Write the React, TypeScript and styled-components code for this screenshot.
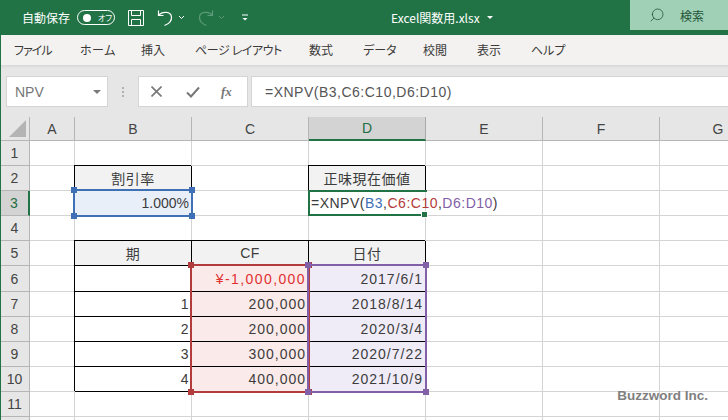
import * as React from 'react';
import styled, { createGlobalStyle } from 'styled-components';
import { Search } from 'lucide-react';

const Global = createGlobalStyle`
  html, body {
    margin: 0;
    padding: 0;
    background: #fff;
  }
  body {
    width: 728px;
    height: 420px;
    overflow: hidden;
    font-family: 'Noto Sans CJK JP', 'Liberation Sans', sans-serif;
  }
`;

const Page = styled.div`
  width: 728px;
  height: 420px;
  overflow: hidden;
  position: relative;
  display: flex;
  flex-direction: column;
  border-left: 1px solid #217346;
  box-sizing: border-box;
`;

const TitleBar = styled.div`
  height: 35px;
  margin-left: -1px;
  flex: none;
  background: #217346;
  color: #fff;
  display: flex;
  align-items: center;
  font-size: 12px;
`;

const AutoSave = styled.span`
  margin-left: 22px;
  width: 48px;
  white-space: nowrap;
`;

const Toggle = styled.div`
  margin-left: 7px;
  width: 38px;
  height: 15px;
  border: 1px solid #fff;
  border-radius: 9px;
  display: flex;
  align-items: center;
  gap: 7px;
  padding-left: 5px;
  box-sizing: border-box;
  font-size: 8px;
  font-feature-settings: 'palt';
`;

const Knob = styled.i`
  width: 8px;
  height: 8px;
  border-radius: 50%;
  background: #fff;
`;

const QuickIcon = styled.svg<{ $left: number }>`
  margin-left: ${(p) => p.$left}px;
  flex: none;
`;

const FileName = styled.div`
  margin-left: 142px;
  font-size: 12px;
  white-space: nowrap;
  display: flex;
  align-items: center;
  gap: 7px;
  font-feature-settings: 'palt';
`;

const Caret = styled.i`
  width: 0;
  height: 0;
  border-left: 3px solid transparent;
  border-right: 3px solid transparent;
  border-top: 3px solid #fff;
`;

const SearchBox = styled.div`
  margin-left: auto;
  width: 98px;
  height: 30px;
  margin-top: -5px;
  background: #a0d0b5;
  color: #24563a;
  display: flex;
  align-items: center;
  font-size: 12px;
  padding-left: 19px;
  gap: 15px;
  box-sizing: border-box;
  flex: none;
`;

const TabBar = styled.div`
  height: 30px;
  flex: none;
  background: #f3f2f1;
  display: flex;
  align-items: center;
  padding-left: 13px;
  gap: 28px;
  font-size: 12px;
  color: #3b3a39;
  padding-bottom: 1px;
  box-sizing: border-box;
  font-feature-settings: 'palt';
`;

const Tab = styled.span<{ $width: number; $squeeze?: number }>`
  width: ${(p) => p.$width}px;
  letter-spacing: ${(p) => p.$squeeze ?? 0}px;
  white-space: nowrap;
`;

const FormulaArea = styled.div`
  height: 52px;
  flex: none;
  background: linear-gradient(#d6d6d6, #e6e6e6 3px);
  display: flex;
  align-items: flex-start;
  padding: 11px 0 0 5px;
  box-sizing: border-box;
`;

const NameBox = styled.div`
  width: 102px;
  height: 31px;
  background: #fff;
  border: 1px solid #d4d4d4;
  box-sizing: border-box;
  display: flex;
  align-items: center;
  justify-content: space-between;
  padding: 0 6px 0 8px;
  font: 14px 'Liberation Sans', sans-serif;
  color: #767676;
`;

const GrayCaret = styled.i`
  width: 0;
  height: 0;
  border-left: 4px solid transparent;
  border-right: 4px solid transparent;
  border-top: 4px solid #7a7a7a;
`;

const Dots = styled.div`
  width: 30px;
  height: 31px;
  display: flex;
  flex-direction: column;
  align-items: center;
  justify-content: center;
  gap: 2px;
`;

const Dot = styled.i`
  width: 2px;
  height: 2px;
  background: #b0b0b0;
`;

const FormulaButtons = styled.div`
  width: 110px;
  height: 31px;
  background: #fff;
  border: 1px solid #d4d4d4;
  box-sizing: border-box;
  display: flex;
  align-items: center;
  padding-left: 12px;
  color: #777;
`;

const ConfirmIcon = styled.svg`
  margin-left: 24px;
  flex: none;
`;

const Fx = styled.span`
  margin-left: 21px;
  font: italic bold 13px 'Liberation Serif', serif;
`;

const FormulaInput = styled.div`
  flex: 1;
  height: 31px;
  margin-left: 3px;
  background: #fff;
  border: 1px solid #d4d4d4;
  border-right: none;
  box-sizing: border-box;
  padding-left: 13px;
  display: flex;
  align-items: center;
  font: 14px 'Liberation Sans', sans-serif;
  color: #555;
  letter-spacing: 0.5px;
`;

const Sheet = styled.div`
  flex: 1;
  display: grid;
  margin-left: -1px;
  grid-template-columns: 30px 45px repeat(6, 117px);
  grid-template-rows: 24px repeat(12, 25.1px);
  font: 14px 'Liberation Sans', 'Noto Sans CJK JP', sans-serif;
  color: #3c3c3c;
  background: #fff;
`;

const Corner = styled.div`
  grid-column: 1;
  grid-row: 1;
  background: #e6e6e6;
  border-right: 1px solid #b5b5b5;
  border-bottom: 1px solid #b5b5b5;
  box-sizing: border-box;
  display: flex;
  align-items: flex-end;
  justify-content: flex-end;
  padding: 0 3px 3px 0;
`;

const CornerMark = styled.i`
  width: 0;
  height: 0;
  border-left: 17px solid transparent;
  border-bottom: 17px solid #b4b4b4;
`;

const ColHeader = styled.div<{ $col: number; $active?: boolean }>`
  grid-column: ${(p) => p.$col};
  grid-row: 1;
  background: ${(p) => (p.$active ? '#d3d3d3' : '#e6e6e6')};
  color: ${(p) => (p.$active ? '#1f6e43' : '#444')};
  border-right: 1px solid ${(p) => (p.$active ? '#a8a8a8' : '#b5b5b5')};
  border-bottom: ${(p) => (p.$active ? '2px solid #217346' : '1px solid #b5b5b5')};
  box-sizing: border-box;
  display: flex;
  align-items: center;
  justify-content: center;
  overflow: hidden;
`;

const RowHeader = styled.div<{ $row: number; $active?: boolean }>`
  grid-column: 1;
  grid-row: ${(p) => p.$row};
  background: ${(p) => (p.$active ? '#d3d3d3' : '#e6e6e6')};
  color: ${(p) => (p.$active ? '#1f6e43' : '#444')};
  border-right: ${(p) => (p.$active ? '2px solid #217346' : '1px solid #b5b5b5')};
  border-bottom: 1px solid #b5b5b5;
  box-sizing: border-box;
  display: flex;
  align-items: center;
  justify-content: center;
`;

const Cell = styled.div<{
  $col: number;
  $row: number;
  $align?: string;
  $boxed?: boolean;
  $bg?: string;
  $color?: string;
  $track?: number;
}>`
  grid-column: ${(p) => p.$col};
  grid-row: ${(p) => p.$row};
  border-right: 1px solid ${(p) => (p.$boxed ? '#000' : '#d4d4d4')};
  border-bottom: 1px solid ${(p) => (p.$boxed ? '#000' : '#d4d4d4')};
  ${(p) => (p.$boxed ? 'box-shadow: -1px -1px 0 #000; z-index: 1;' : '')}
  background: ${(p) => p.$bg ?? 'transparent'};
  color: ${(p) => p.$color ?? 'inherit'};
  box-sizing: border-box;
  display: flex;
  align-items: center;
  justify-content: ${(p) => p.$align ?? 'flex-end'};
  padding: 0 2px;
  white-space: nowrap;
  letter-spacing: ${(p) => p.$track ?? 0.5}px;
`;

const Range = styled.div<{ $col: string; $row: string; $color: string }>`
  grid-column: ${(p) => p.$col};
  grid-row: ${(p) => p.$row};
  position: relative;
  margin: -2px -1px -1px -2px;
  border: 2px solid ${(p) => p.$color};
  pointer-events: none;
  z-index: 2;
`;

const Handle = styled.i<{ $x: 'left' | 'right'; $y: 'top' | 'bottom'; $color: string }>`
  position: absolute;
  ${(p) => p.$x}: -4px;
  ${(p) => p.$y}: -4px;
  width: 6px;
  height: 6px;
  background: ${(p) => p.$color};
`;

const ActiveCell = styled.div`
  grid-column: 5;
  grid-row: 4;
  position: relative;
  margin: -1px -1px 0 -1px;
  padding-left: 1px;
  border: 2px solid #217346;
  border-right: none;
  z-index: 3;
  display: flex;
  align-items: center;
  white-space: nowrap;
  letter-spacing: 0.5px;
`;

const FillHandle = styled.i`
  position: absolute;
  right: -1px;
  bottom: -4px;
  width: 5px;
  height: 5px;
  background: #217346;
  border: 1px solid #fff;
`;

const Ref = styled.span<{ $color: string }>`
  color: ${(p) => p.$color};
`;

const Watermark = styled.div`
  position: absolute;
  right: 20px;
  bottom: 17px;
  z-index: 4;
  font: bold 13.5px 'Liberation Sans', sans-serif;
  color: #808080;
`;

const columns = ['A', 'B', 'C', 'D', 'E', 'F', 'G'];
const BLUE = '#3f6fb5';
const RED = '#b23b3b';
const PURPLE = '#8260a8';
const HEAD = '#f2f2f2';
const CF_BG = '#fbeaea';
const DATE_BG = '#f0ecf7';

type CellDef = {
  text?: string;
  align?: string;
  boxed?: boolean;
  bg?: string;
  color?: string;
  track?: number;
};

// cells that differ from the empty grid, keyed by "row:col"
const cells: Record<string, CellDef> = {
  '2:B': { text: '割引率', align: 'center', boxed: true, bg: HEAD },
  '2:D': { text: '正味現在価値', align: 'center', boxed: true, bg: HEAD },
  '3:B': { text: '1.000%', bg: '#e8eff9', track: 0 },
  '5:B': { text: '期', align: 'center', boxed: true, bg: HEAD },
  '5:C': { text: 'CF', align: 'center', boxed: true, bg: HEAD },
  '5:D': { text: '日付', align: 'center', boxed: true, bg: HEAD },
  '6:B': { boxed: true },
  '6:C': { text: '¥-1,000,000', boxed: true, bg: CF_BG, color: '#e03030', track: 1.4 },
  '6:D': { text: '2017/6/1', boxed: true, bg: DATE_BG, track: 1 },
  '7:B': { text: '1', boxed: true },
  '7:C': { text: '200,000', boxed: true, bg: CF_BG, track: 1 },
  '7:D': { text: '2018/8/14', boxed: true, bg: DATE_BG, track: 1 },
  '8:B': { text: '2', boxed: true },
  '8:C': { text: '200,000', boxed: true, bg: CF_BG, track: 1 },
  '8:D': { text: '2020/3/4', boxed: true, bg: DATE_BG, track: 1 },
  '9:B': { text: '3', boxed: true },
  '9:C': { text: '300,000', boxed: true, bg: CF_BG, track: 1 },
  '9:D': { text: '2020/7/22', boxed: true, bg: DATE_BG, track: 1 },
  '10:B': { text: '4', boxed: true },
  '10:C': { text: '400,000', boxed: true, bg: CF_BG, track: 1 },
  '10:D': { text: '2021/10/9', boxed: true, bg: DATE_BG, track: 1 },
};

const tabs = [
  { label: 'ファイル', width: 38, squeeze: -1 },
  { label: 'ホーム', width: 33, squeeze: 0.5 },
  { label: '挿入', width: 26 },
  { label: 'ページ レイアウト', width: 86, squeeze: -0.4 },
  { label: '数式', width: 26 },
  { label: 'データ', width: 32 },
  { label: '校閲', width: 26 },
  { label: '表示', width: 26 },
  { label: 'ヘルプ', width: 32 },
];

const Corners = ({ color }: { color: string }) => (
  <>
    <Handle $x="left" $y="top" $color={color} />
    <Handle $x="right" $y="top" $color={color} />
    <Handle $x="left" $y="bottom" $color={color} />
    <Handle $x="right" $y="bottom" $color={color} />
  </>
);

export default function App() {
  const rows = Array.from({ length: 12 }, (_, i) => i + 1);

  return (
    <Page>
      <Global />
      <TitleBar>
        <AutoSave>自動保存</AutoSave>
        <Toggle>
          <Knob />
          オフ
        </Toggle>
        <QuickIcon $left={13} width="16" height="16" viewBox="0 0 16 16" fill="none" stroke="#fff">
          <path d="M.5.5h15v15H.5z" />
          <path d="M3.5.5v5h9v-5M3.5 15.5v-6h9v6" />
        </QuickIcon>
        <QuickIcon $left={13} width="16" height="18" viewBox="0 0 16 18" fill="none" stroke="#fff" strokeWidth="1.2">
          <path d="M1.5 1.5v5h5M1.5 6.5C5 2 14 2 14.5 8c.3 4-3 7-7 8.5" />
        </QuickIcon>
        <QuickIcon $left={5} width="7" height="5" viewBox="0 0 7 5" fill="none" stroke="#fff">
          <path d="M1 1l2.5 2.5L6 1" />
        </QuickIcon>
        <QuickIcon $left={13} width="16" height="18" viewBox="0 0 16 18" fill="none" stroke="#5c9a78" strokeWidth="1.2">
          <path d="M14.5 1.5v5h-5M14.5 6.5C11 2 2 2 1.5 8c-.3 4 3 7 7 8.5" />
        </QuickIcon>
        <QuickIcon $left={4} width="7" height="5" viewBox="0 0 7 5" fill="none" stroke="#5c9a78">
          <path d="M1 1l2.5 2.5L6 1" />
        </QuickIcon>
        <QuickIcon $left={16} width="8" height="7" viewBox="0 0 8 7" fill="#fff" stroke="#fff">
          <path d="M1 1h6" />
          <path d="M1.5 4h5L4 6.5z" stroke="none" />
        </QuickIcon>
        <FileName>
          Excel関数用.xlsx
          <Caret />
        </FileName>
        <SearchBox>
          <Search size={16} strokeWidth={1.2} style={{ transform: 'scaleX(-1)' }} />
          検索
        </SearchBox>
      </TitleBar>
      <TabBar>
        {tabs.map((tab) => (
          <Tab key={tab.label} $width={tab.width} $squeeze={tab.squeeze}>
            {tab.label}
          </Tab>
        ))}
      </TabBar>
      <FormulaArea>
        <NameBox>
          NPV
          <GrayCaret />
        </NameBox>
        <Dots>
          <Dot />
          <Dot />
          <Dot />
        </Dots>
        <FormulaButtons>
          <svg width="11" height="11" viewBox="0 0 11 11" fill="none" stroke="#777" strokeWidth="1.6">
            <path d="M.5.5l10 10M10.5.5l-10 10" />
          </svg>
          <ConfirmIcon width="14" height="12" viewBox="0 0 14 12" fill="none" stroke="#777" strokeWidth="2">
            <path d="M1 6.5l4 4L13 1.5" />
          </ConfirmIcon>
          <Fx>fx</Fx>
        </FormulaButtons>
        <FormulaInput>=XNPV(B3,C6:C10,D6:D10)</FormulaInput>
      </FormulaArea>
      <Sheet>
        <Corner>
          <CornerMark />
        </Corner>
        {columns.map((col, i) => (
          <ColHeader key={col} $col={i + 2} $active={col === 'D'}>
            {col}
          </ColHeader>
        ))}
        {rows.map((row) => (
          <React.Fragment key={row}>
            <RowHeader $row={row + 1} $active={row === 3}>
              {row < 12 ? row : ''}
            </RowHeader>
            {columns.map((col, i) => {
              const cell = cells[`${row}:${col}`] ?? {};
              return (
                <Cell
                  key={col}
                  $col={i + 2}
                  $row={row + 1}
                  $align={cell.align}
                  $boxed={cell.boxed}
                  $bg={cell.bg}
                  $color={cell.color}
                  $track={cell.track}
                >
                  {cell.text}
                </Cell>
              );
            })}
          </React.Fragment>
        ))}
        <Range $col="3" $row="4" $color={BLUE}>
          <Corners color={BLUE} />
        </Range>
        <Range $col="4" $row="7 / 12" $color={RED}>
          <Corners color={RED} />
        </Range>
        <Range $col="5" $row="7 / 12" $color={PURPLE}>
          <Corners color={PURPLE} />
        </Range>
        <ActiveCell>
          =XNPV(<Ref $color={BLUE}>B3</Ref>,<Ref $color={RED}>C6:C10</Ref>,
          <Ref $color={PURPLE}>D6:D10</Ref>)
          <FillHandle />
        </ActiveCell>
      </Sheet>
      <Watermark>Buzzword Inc.</Watermark>
    </Page>
  );
}
